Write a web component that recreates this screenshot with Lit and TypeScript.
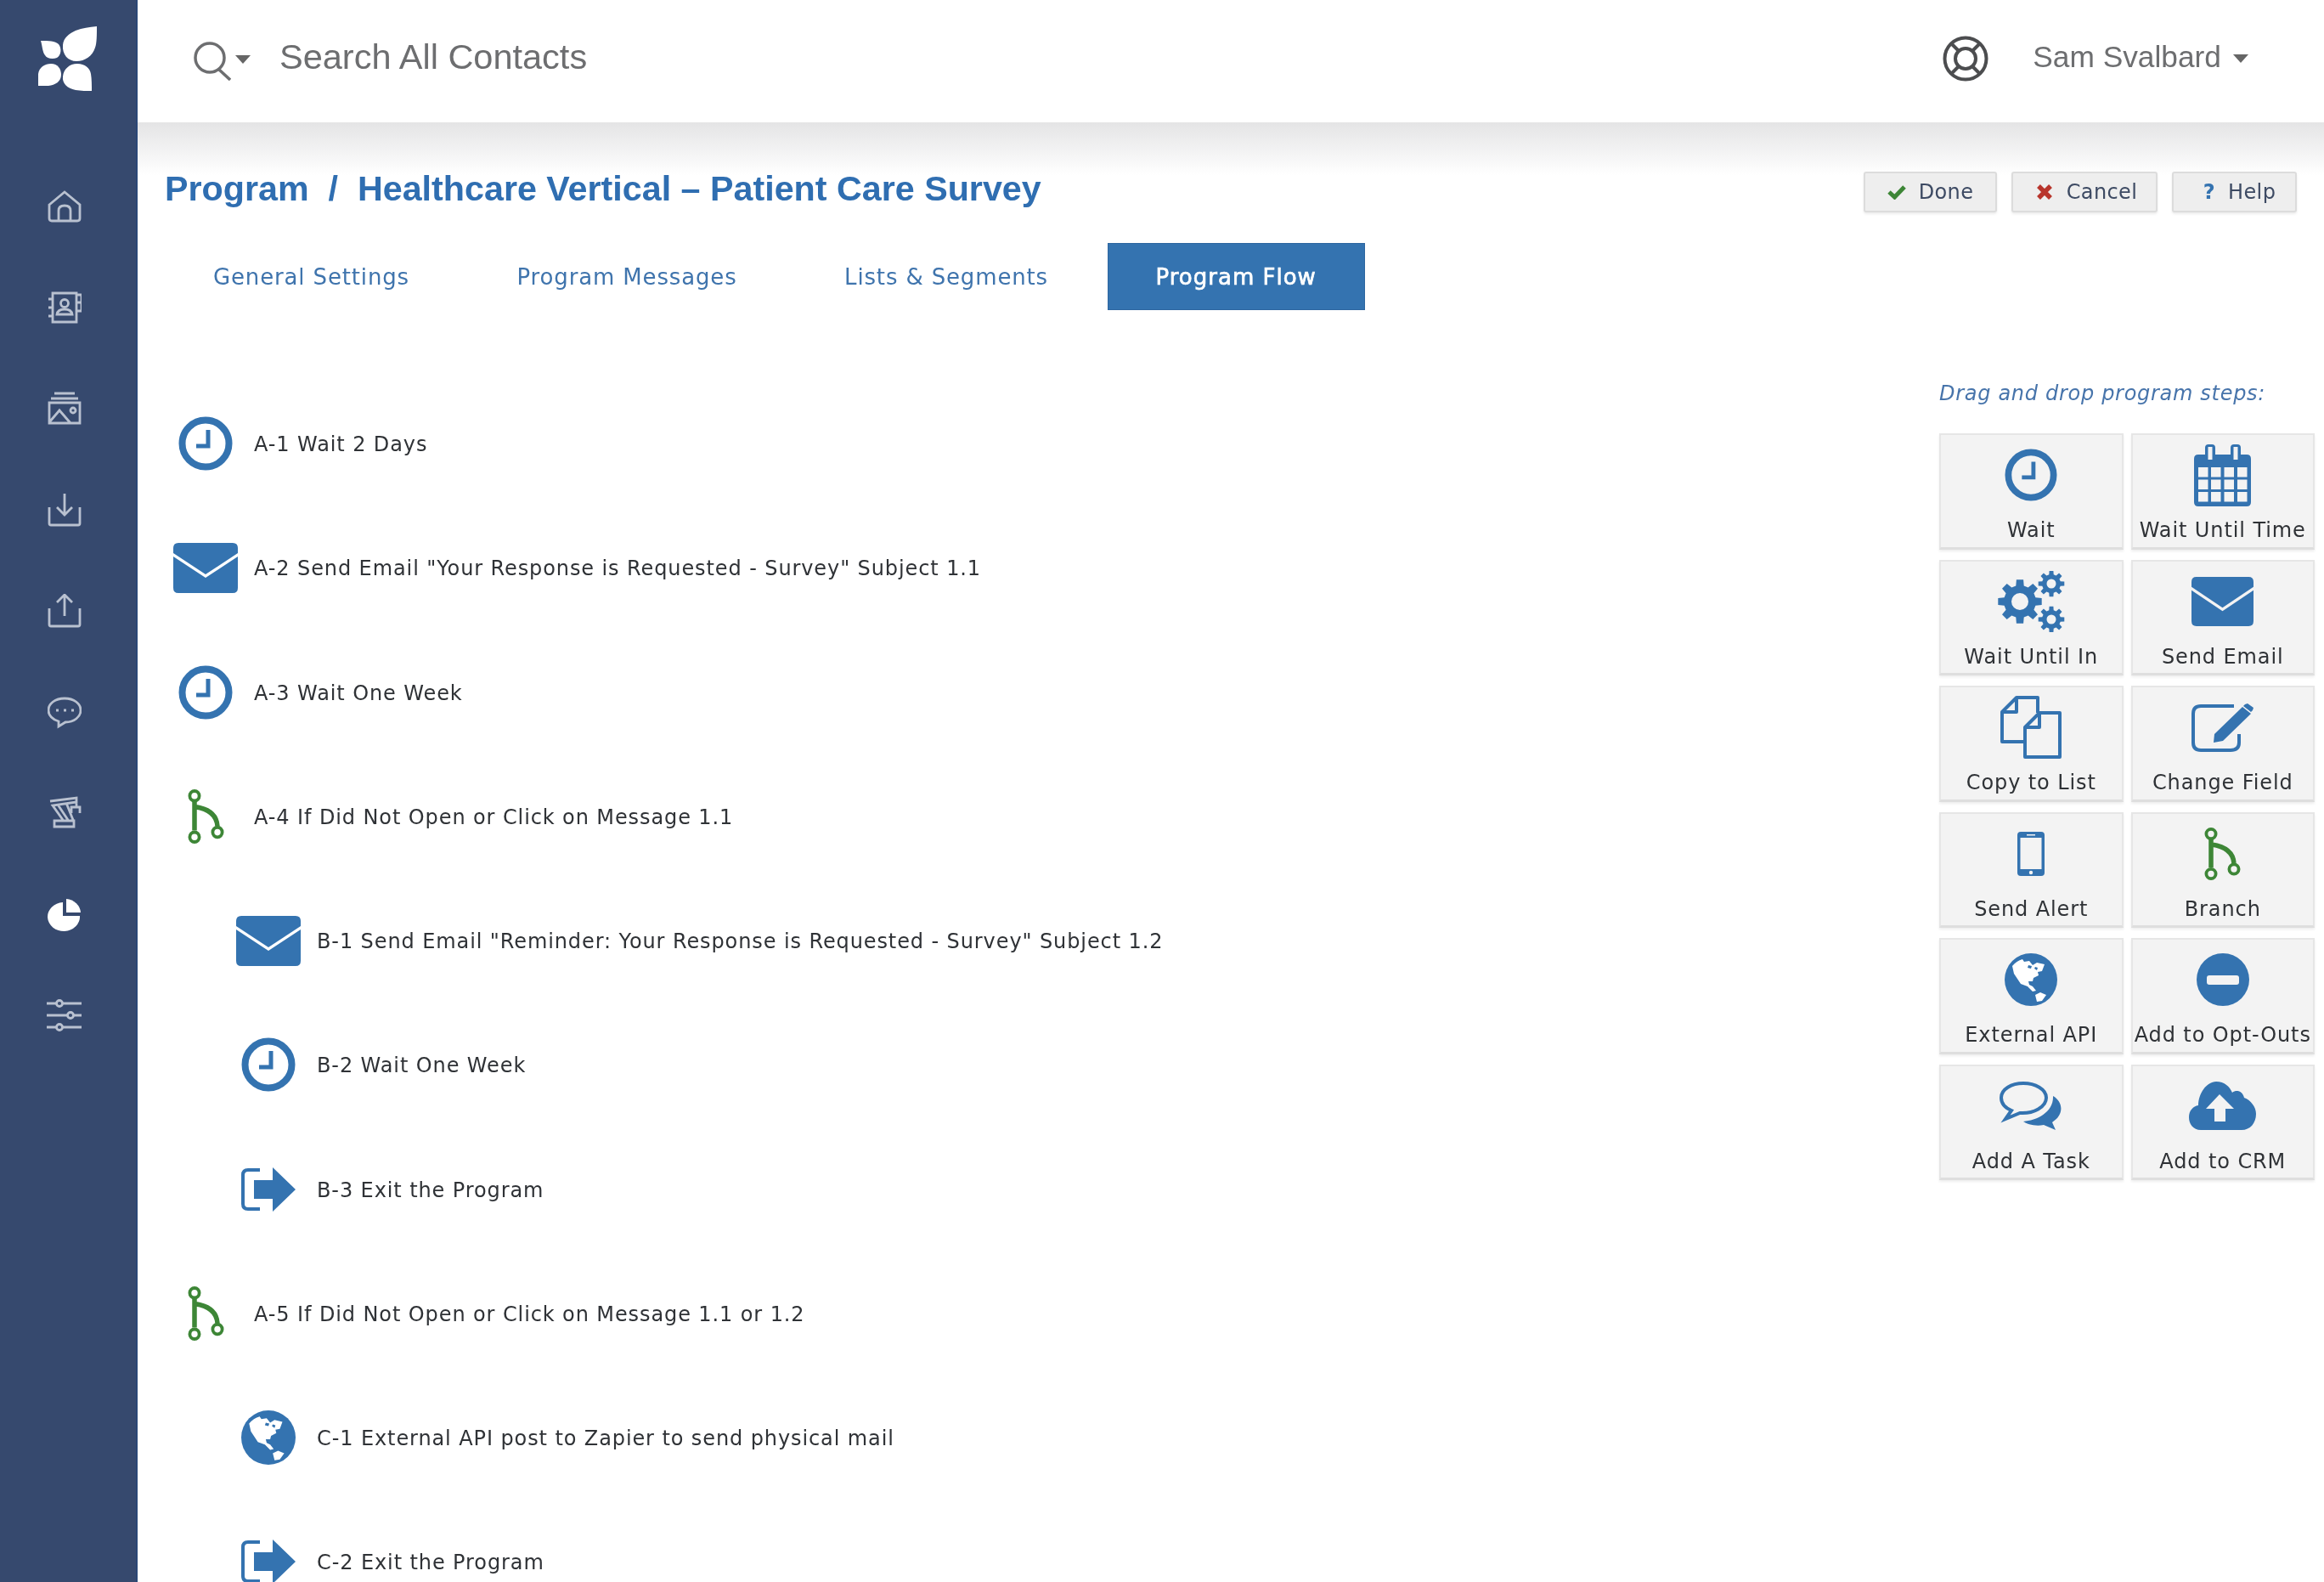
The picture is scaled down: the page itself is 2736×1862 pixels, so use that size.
import { LitElement, html, svg, css } from 'lit';
import { customElement } from 'lit/decorators.js';

const BLUE = '#3473b0';
const GREEN = '#3d8636';

// builds a cog outline, the hole is cut with evenodd
function gear(cx: number, cy: number, outer: number, inner: number, hole: number, teeth = 8) {
  let d = '';
  const step = (Math.PI * 2) / teeth;
  for (let i = 0; i < teeth; i++) {
    const a = i * step;
    const pts: [number, number][] = [
      [inner, a - step * 0.32],
      [outer, a - step * 0.2],
      [outer, a + step * 0.2],
      [inner, a + step * 0.32],
    ];
    pts.forEach(([r, t], j) => {
      d += `${i === 0 && j === 0 ? 'M' : 'L'}${(cx + r * Math.cos(t)).toFixed(1)} ${(cy + r * Math.sin(t)).toFixed(1)} `;
    });
  }
  d += `Z M${cx - hole} ${cy} a${hole} ${hole} 0 1 0 ${hole * 2} 0 a${hole} ${hole} 0 1 0 ${-hole * 2} 0 Z`;
  return d;
}

const icons: Record<string, { box: string; body: unknown }> = {
  clock: {
    box: '0 0 64 64',
    body: svg`<circle cx="32" cy="32" r="27.5" fill="none" stroke="${BLUE}" stroke-width="8"/>
      <path d="M35 16V35H21" fill="none" stroke="${BLUE}" stroke-width="5"/>`,
  },
  mail: {
    box: '0 0 76 59',
    body: svg`<path fill="${BLUE}" d="M6 0H70Q76 0 76 6V12L38 37L0 12V6Q0 0 6 0Z"/>
      <path fill="${BLUE}" d="M0 16L38 41L76 16V53Q76 59 70 59H6Q0 59 0 53Z"/>`,
  },
  branch: {
    box: '0 0 43 62',
    body: svg`<g fill="none" stroke="${GREEN}">
      <path stroke-width="5.5" d="M8 14V47M9 20C22 22 34 28 35 42"/>
      <circle cx="8" cy="7.5" r="5.6" stroke-width="3.8"/>
      <circle cx="8" cy="54.5" r="5.6" stroke-width="3.8"/>
      <circle cx="35" cy="49" r="5.6" stroke-width="3.8"/></g>`,
  },
  exit: {
    box: '0 0 66 54',
    body: svg`<path fill="none" stroke="${BLUE}" stroke-width="4" d="M23 4H9Q3 4 3 10V44Q3 50 9 50H23"/>
      <path fill="${BLUE}" d="M16 16H38V1L65 27L38 53V38H16Z"/>`,
  },
  globe: {
    box: '0 0 62 62',
    body: svg`<circle cx="31" cy="31" r="31" fill="${BLUE}"/>
      <path fill="#fff" d="M9 15Q14 9 21 7L23 10L29 9L33 14L38 11L47 13L44 21L39 22L40 26L34 29L33 33L28 33L29 37L33 39L37 44L33 45L27 39L19 36L15 30L11 24Z"/>
      <path fill="#fff" d="M36 49L42 46L49 49L44 56L38 57Z"/>
      <path fill="${BLUE}" d="M28 14l4 1l-1 3l-4-1zM36 16l3 1l-1 3l-3-2z"/>`,
  },
  minus: {
    box: '0 0 62 62',
    body: svg`<circle cx="31" cy="31" r="31" fill="${BLUE}"/><rect x="12" y="26" width="38" height="11" rx="3" fill="#f3f3f3"/>`,
  },
  calendar: {
    box: '0 0 67 73',
    body: svg`<path fill="${BLUE}" d="M5 12H13V4Q13 0 17 0H21Q25 0 25 4V12H43V4Q43 0 47 0H51Q55 0 55 4V12H62Q67 12 67 17V68Q67 73 62 73H5Q0 73 0 68V17Q0 12 5 12Z"/>
      <rect x="16.5" y="3" width="5" height="15" fill="#f3f3f3"/><rect x="46.5" y="3" width="5" height="15" fill="#f3f3f3"/>
      <g fill="#f3f3f3">
        ${[27, 41.5, 56].map((y) => [5, 20, 35.5, 51].map((x) => svg`<rect x="${x}" y="${y}" width="11.5" height="11.5"/>`))}
      </g>`,
  },
  gears: {
    box: '0 0 79 72',
    body: svg`<g fill="${BLUE}" fill-rule="evenodd">
      <path d="${gear(26, 36, 26, 19, 10)}"/>
      <path d="${gear(63, 15, 15.5, 11, 5.5)}"/>
      <path d="${gear(63, 57, 15.5, 11, 5.5)}"/></g>`,
  },
  copy: {
    box: '0 0 72 74',
    body: svg`<g fill="none" stroke="${BLUE}" stroke-width="4" stroke-linejoin="round">
      <path d="M30 54H2V19L19 2H44V20"/><path d="M2 19H19V2" />
      <path d="M29 72V37L46 20H70V72Z" fill="#f3f3f3"/><path d="M29 37H46V20"/></g>`,
  },
  edit: {
    box: '0 0 73 57',
    body: svg`<path fill="none" stroke="${BLUE}" stroke-width="4" d="M50 3H11Q2 3 2 12V46Q2 55 11 55H46Q56 55 56 46V36"/>
      <path fill="${BLUE}" d="M60 4L70 12L37 44L26 46L27 36ZM63 1L66 0L73 5L72 8L70 10L61 3Z"/>`,
  },
  phone: {
    box: '0 0 32 52',
    body: svg`<rect width="32" height="52" rx="4" fill="${BLUE}"/><rect x="3.5" y="7" width="25" height="37" fill="#f3f3f3"/>
      <rect x="11" y="3" width="10" height="1.5" fill="#f3f3f3"/><circle cx="16" cy="48" r="2.2" fill="#f3f3f3"/>`,
  },
  chat: {
    box: '0 0 74 57',
    body: svg`<path fill="none" stroke="${BLUE}" stroke-width="4" d="M28 2C14 2 2 9 2 19C2 26 7 31 14 34L7 44L24 37C40 38 55 30 55 19C55 9 42 2 28 2Z"/>
      <path fill="${BLUE}" d="M63 17C72 22 75 32 70 40C68 44 64 46 62 48L66 57L52 51C42 53 32 50 28 47C44 46 64 36 63 17Z"/>`,
  },
  cloud: {
    box: '0 0 79 57',
    body: svg`<path fill="${BLUE}" d="M14 57C5 57 0 50 0 42C0 34 5 29 11 28C11 14 21 0 32 0C42 0 48 6 51 13C56 9 63 11 65 19C73 22 79 30 79 38C79 49 72 57 62 57Z"/>
      <path fill="#f3f3f3" d="M36 15L53 32H43V47H30V32H20Z"/>`,
  },
  check: {
    box: '0 0 22 18',
    body: svg`<path fill="none" stroke="${GREEN}" stroke-width="5" d="M2 9L8.5 15L20 3"/>`,
  },
  cross: {
    box: '0 0 18 18',
    body: svg`<path fill="none" stroke="#b8352c" stroke-width="5.5" d="M2 2L16 16M16 2L2 16"/>`,
  },
};

function icon(name: string, w: number, h: number) {
  const i = icons[name];
  return html`<svg width="${w}" height="${h}" viewBox="${i.box}" preserveAspectRatio="none">${i.body}</svg>`;
}

// line icons of the left rail, all on a 40x40 box
const rail = [
  svg`<path d="M2 18L20 3L38 18V34Q38 37 35 37H5Q2 37 2 34ZM13 37V25Q13 19 20 19Q27 19 27 25V37"/>`,
  svg`<path d="M6 3H34V37H6ZM1 10H6M1 20H6M1 30H6M34 5H40V14H34M34 14H40V24H34"/><circle cx="20" cy="15" r="4.5"/><path d="M11 28Q12 22 20 22Q28 22 29 28Z"/>`,
  svg`<path d="M8 2H32M4 8H36M2 13H38V37H2ZM2 36L14 22L27 37"/><circle cx="30" cy="22" r="3"/>`,
  svg`<path d="M20 1V25M11 17L20 26L29 17M2 17V36Q2 38 4 38H36Q38 38 38 36V17"/>`,
  svg`<path d="M20 26V2M11 10L20 1L29 10M2 17V36Q2 38 4 38H36Q38 38 38 36V17"/>`,
  svg`<path d="M20 4C9 4 1 10 1 18C1 24 6 29 13 31L13 37L21 32C31 32 39 26 39 18C39 10 31 4 20 4Z"/><path stroke-dasharray="3 6" d="M10 18H31"/>`,
  svg`<path d="M3 6L34 2L34 7L6 11L18 28M12 10L24 28M22 8L30 28M8 29H31V36H8ZM34 7V12M28 20V13H38V20"/>`,
];

const steps = [
  { icon: 'clock', w: 64, h: 64, text: 'A-1 Wait 2 Days' },
  { icon: 'mail', w: 76, h: 59, text: 'A-2 Send Email "Your Response is Requested - Survey" Subject 1.1' },
  { icon: 'clock', w: 64, h: 64, text: 'A-3 Wait One Week' },
  { icon: 'branch', w: 43, h: 64, text: 'A-4 If Did Not Open or Click on Message 1.1' },
  { icon: 'mail', w: 76, h: 59, text: 'B-1 Send Email "Reminder: Your Response is Requested - Survey" Subject 1.2', sub: true },
  { icon: 'clock', w: 64, h: 64, text: 'B-2 Wait One Week', sub: true },
  { icon: 'exit', w: 66, h: 54, text: 'B-3 Exit the Program', sub: true },
  { icon: 'branch', w: 43, h: 64, text: 'A-5 If Did Not Open or Click on Message 1.1 or 1.2' },
  { icon: 'globe', w: 64, h: 64, text: 'C-1 External API post to Zapier to send physical mail', sub: true },
  { icon: 'exit', w: 66, h: 54, text: 'C-2 Exit the Program', sub: true },
];

const palette = [
  { icon: 'clock', w: 62, h: 62, label: 'Wait' },
  { icon: 'calendar', w: 67, h: 73, label: 'Wait Until Time' },
  { icon: 'gears', w: 79, h: 72, label: 'Wait Until In' },
  { icon: 'mail', w: 73, h: 58, label: 'Send Email' },
  { icon: 'copy', w: 72, h: 74, label: 'Copy to List' },
  { icon: 'edit', w: 73, h: 57, label: 'Change Field' },
  { icon: 'phone', w: 32, h: 52, label: 'Send Alert' },
  { icon: 'branch', w: 43, h: 62, label: 'Branch' },
  { icon: 'globe', w: 62, h: 62, label: 'External API' },
  { icon: 'minus', w: 62, h: 62, label: 'Add to Opt-Outs' },
  { icon: 'chat', w: 74, h: 57, label: 'Add A Task' },
  { icon: 'cloud', w: 79, h: 57, label: 'Add to CRM' },
];

@customElement('app-root')
export class AppRoot extends LitElement {
  static styles = css`
    :host {
      display: flex;
      width: 2736px;
      height: 1862px;
      overflow: hidden;
      background: #fff;
      font-family: 'DejaVu Sans', sans-serif;
      color: #3a3f47;
      filter: blur(0.6px);
    }

    .sidebar {
      flex: none;
      width: 160px;
      border-right: 2px solid #2b4777;
      background: #36496e;
      display: flex;
      flex-direction: column;
      align-items: center;
      padding-top: 31px;
      box-sizing: content-box;
    }
    .logo {
      margin-bottom: 115px;
      margin-right: 2px;
    }
    .rail {
      display: flex;
      flex-direction: column;
      align-items: center;
      gap: 79px;
      margin-right: 8px;
    }
    .rail svg {
      display: block;
      fill: none;
      stroke: #b9c1d0;
      stroke-width: 2.8;
    }
    .rail .pie {
      fill: #fff;
      stroke: none;
    }

    .main {
      flex: 1;
      min-width: 0;
      position: relative;
    }
    .top {
      height: 144px;
      display: flex;
      align-items: center;
      font-family: 'Liberation Sans', sans-serif;
      color: #6d6e70;
    }
    .top-shade {
      position: absolute;
      left: 0;
      right: 0;
      top: 144px;
      height: 62px;
      background: linear-gradient(#e4e4e5, #fff);
      pointer-events: none;
    }
    .search-icon {
      margin-left: 66px;
    }
    .caret {
      width: 0;
      height: 0;
      border-left: 9px solid transparent;
      border-right: 9px solid transparent;
      border-top: 10px solid #666;
    }
    .search-caret {
      margin-left: 5px;
      margin-right: 34px;
      margin-top: -4px;
    }
    .search-text {
      flex: 1;
      font-size: 41.5px;
      margin-top: -10px;
    }
    .help-ring {
      margin-top: -7px;
    }
    .user {
      font-size: 35.3px;
      margin-top: -10px;
      margin-left: 52px;
      margin-right: 14px;
    }
    .user-caret {
      margin-top: -6px;
      margin-right: 89px;
    }

    .content {
      position: relative;
      padding: 58px 32px 0;
    }
    .title-row {
      display: flex;
      justify-content: space-between;
      align-items: center;
      height: 48px;
    }
    h1 {
      margin: -8px 0 0;
      font: bold 41.25px 'Liberation Sans', sans-serif;
      color: #2f6eb1;
      white-space: pre;
    }
    .actions {
      display: flex;
      gap: 17px;
    }
    .btn {
      height: 48px;
      box-sizing: border-box;
      display: flex;
      align-items: center;
      justify-content: center;
      gap: 15px;
      background: #eeeeee;
      border: 2px solid #dcdcdc;
      border-radius: 3px;
      box-shadow: 0 2px 3px rgba(0, 0, 0, 0.08);
      font-size: 24px;
      letter-spacing: 0.4px;
      color: #3d4a63;
    }
    .done {
      width: 157px;
    }
    .cancel {
      width: 172px;
      padding-left: 6px;
      gap: 17px;
    }
    .help {
      width: 147px;
      padding-left: 12px;
    }
    .help b {
      color: #3473b0;
    }

    .tabs {
      display: flex;
      gap: 12.5px;
      margin-top: 36px;
      height: 79px;
    }
    .tab {
      display: flex;
      align-items: center;
      padding: 0 57px;
      font-size: 26px;
      letter-spacing: 0.85px;
      color: #3f74ad;
      white-space: nowrap;
    }
    .tab.active {
      background: #3473b0;
      border: 1px solid #2d66a0;
      color: #fff;
      -webkit-text-stroke: 0.7px #fff;
      letter-spacing: 1px;
      padding: 0 56px;
    }

    .body {
      display: flex;
      justify-content: space-between;
    }
    .steps {
      padding-top: 84px;
    }
    .step {
      height: 146.25px;
      display: flex;
      align-items: center;
      font-size: 24px;
      letter-spacing: 0.9px;
      white-space: nowrap;
      color: #2f3236;
    }
    .step.sub {
      padding-left: 74px;
    }
    .step-icon {
      flex: none;
      width: 96px;
      margin-right: 9px;
      display: flex;
      justify-content: center;
    }
    .step-text {
      margin-top: 2px;
    }

    .palette {
      width: 442px;
      margin-right: -21px;
      padding-top: 82px;
    }
    .hint {
      height: 32px;
      line-height: 32px;
      margin-bottom: 31px;
      font-size: 24px;
      letter-spacing: 0.7px;
      font-style: italic;
      color: #4774ab;
      white-space: nowrap;
    }
    .cards {
      display: grid;
      grid-template-columns: 216.5px 216.5px;
      grid-auto-rows: 136.5px;
      column-gap: 9px;
      row-gap: 12px;
    }
    .card {
      box-sizing: border-box;
      background: #f3f3f3;
      border: 2px solid #e6e6e6;
      border-bottom: 3px solid #dedede;
      box-shadow: 0 2px 3px rgba(0, 0, 0, 0.07);
      display: flex;
      flex-direction: column;
      align-items: center;
    }
    .card-icon {
      height: 94px;
      display: flex;
      align-items: center;
      justify-content: center;
    }
    .card-label {
      font-size: 24px;
      letter-spacing: 0.9px;
      line-height: 32px;
      margin-top: 2px;
      color: #2f3236;
      white-space: nowrap;
    }
    svg {
      display: block;
    }
  `;

  render() {
    return html`
      <nav class="sidebar">
        <svg class="logo" width="69" height="77" viewBox="0 0 69 77" fill="#fff">
          <path d="M69 0C69 10 69 20 67 25C64 35 55 41 45 41C35 41 28 33 29 22C30 13 36 9 44 5C52 2 60 1 69 0Z"/>
          <path d="M3 17C12 17 20 17 24 21C28 26 27 34 22 37C17 39 10 38 8 34C5 30 5 24 3 17Z"/>
          <path d="M0 70V56C1 48 8 44 15 44C23 44 27 50 27 57C27 65 20 69 12 70Z"/>
          <path d="M63 76C58 76 50 76 44 75C34 73 28 67 29 59C30 50 37 44 46 44C55 44 61 49 62 56C63 62 63 70 63 76Z"/>
        </svg>
        <div class="rail">
          ${rail.map((p) => html`<svg width="40" height="40" viewBox="0 0 40 40">${p}</svg>`)}
          <svg class="pie" width="40" height="40" viewBox="0 0 40 40">
            <path d="M18 6V22H38A19 17 0 1 1 18 6Z"/><path d="M22 2A19 17 0 0 1 39 18H22Z"/>
          </svg>
          <svg width="42" height="40" viewBox="0 0 42 40">
            <path d="M0 6H41M0 20H41M0 34H41"/>
            <circle cx="15" cy="6" r="3.5" fill="#36496e"/><circle cx="28" cy="20" r="3.5" fill="#36496e"/><circle cx="15" cy="34" r="3.5" fill="#36496e"/>
          </svg>
        </div>
      </nav>

      <div class="main">
        <header class="top">
          <svg class="search-icon" width="44" height="46" viewBox="0 0 44 46" fill="none" stroke="#6d6e70" stroke-width="3.5">
            <circle cx="19" cy="19" r="17"/><path d="M30 33L43 45"/>
          </svg>
          <span class="caret search-caret"></span>
          <span class="search-text">Search All Contacts</span>
          <svg class="help-ring" width="54" height="54" viewBox="0 0 54 54" fill="none" stroke="#4c4d4f" stroke-width="4">
            <circle cx="27" cy="27" r="24.5"/><circle cx="27" cy="27" r="12"/>
            <path d="M19 18L10 9M35 18L44 9M19 36L10 45M35 36L44 45"/>
          </svg>
          <span class="user">Sam Svalbard</span>
          <span class="caret user-caret"></span>
        </header>
        <div class="top-shade"></div>

        <div class="content">
          <div class="title-row">
            <h1>Program  /  Healthcare Vertical – Patient Care Survey</h1>
            <div class="actions">
              <div class="btn done">${icon('check', 22, 18)}<span>Done</span></div>
              <div class="btn cancel">${icon('cross', 18, 18)}<span>Cancel</span></div>
              <div class="btn help"><b>?</b><span>Help</span></div>
            </div>
          </div>

          <div class="tabs">
            <div class="tab">General Settings</div>
            <div class="tab">Program Messages</div>
            <div class="tab">Lists &amp; Segments</div>
            <div class="tab active">Program Flow</div>
          </div>

          <div class="body">
            <div class="steps">
              ${steps.map(
                (s) => html`<div class="step ${s.sub ? 'sub' : ''}">
                  <span class="step-icon">${icon(s.icon, s.w, s.h)}</span>
                  <span class="step-text">${s.text}</span>
                </div>`
              )}
            </div>
            <aside class="palette">
              <div class="hint">Drag and drop program steps:</div>
              <div class="cards">
                ${palette.map(
                  (c) => html`<div class="card">
                    <div class="card-icon">${icon(c.icon, c.w, c.h)}</div>
                    <div class="card-label">${c.label}</div>
                  </div>`
                )}
              </div>
            </aside>
          </div>
        </div>
      </div>
    `;
  }
}
